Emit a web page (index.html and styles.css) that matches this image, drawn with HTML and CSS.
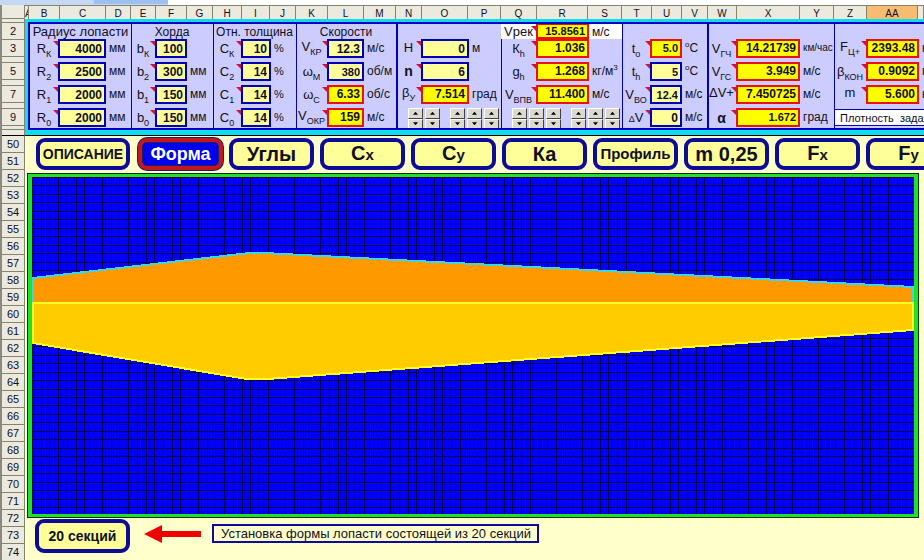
FILE: index.html
```html
<!DOCTYPE html>
<html lang="ru">
<head>
<meta charset="utf-8">
<title>Расчёт лопасти</title>
<link rel="stylesheet" href="styles.css">
</head>
<body>
<div class="strip"><span></span></div>
<div class="sheet">
  <div class="rows">
    <span class="r corner"></span><span class="r r1"></span><span class="r">2</span><span class="r">3</span><span class="r thin"></span><span class="r">5</span><span class="r thin"></span><span class="r">7</span><span class="r thin"></span><span class="r">9</span><span class="r r10"></span><span class="r r11"></span>
    <span class="r">50</span><span class="r">51</span><span class="r">52</span><span class="r">53</span><span class="r">54</span><span class="r">55</span><span class="r">56</span><span class="r">57</span><span class="r">58</span><span class="r">59</span><span class="r">60</span><span class="r">61</span><span class="r">62</span><span class="r">63</span><span class="r">64</span><span class="r">65</span><span class="r">66</span><span class="r">67</span><span class="r">68</span><span class="r">69</span><span class="r">70</span><span class="r">71</span><span class="r">72</span><span class="r">73</span><span class="r">74</span>
  </div>
  <main class="content">
    <div class="cols">
      <span>A</span><span>B</span><span>C</span><span>D</span><span>E</span><span>F</span><span>G</span><span>H</span><span>I</span><span>J</span><span>K</span><span>L</span><span>M</span><span>N</span><span>O</span><span>P</span><span>Q</span><span>R</span><span>S</span><span>T</span><span>U</span><span>V</span><span>W</span><span>X</span><span>Y</span><span>Z</span><span class="active">AA</span><span></span>
    </div>
    <div class="frozen">
      <div class="panel">
        <section class="group g1">
          <h2 class="large">Радиус лопасти</h2>
          <label for="rk">R<sub>К</sub></label><input id="rk" value="4000"><span>мм</span>
          <label for="r2">R<sub>2</sub></label><input id="r2" value="2500"><span>мм</span>
          <label for="r1">R<sub>1</sub></label><input id="r1" value="2000"><span>мм</span>
          <label for="r0">R<sub>0</sub></label><input id="r0" value="2000"><span>мм</span>
        </section>
        <section class="group g2">
          <h2>Хорда</h2>
          <label for="bk">b<sub>К</sub></label><input id="bk" value="100"><span></span>
          <label for="b2">b<sub>2</sub></label><input id="b2" value="300"><span>мм</span>
          <label for="b1">b<sub>1</sub></label><input id="b1" value="150"><span>мм</span>
          <label for="b0">b<sub>0</sub></label><input id="b0" value="150"><span>мм</span>
        </section>
        <section class="group g3">
          <h2>Отн. толщина</h2>
          <label for="ck">C<sub>К</sub></label><input id="ck" value="10"><span class="small">%</span>
          <label for="c2">C<sub>2</sub></label><input id="c2" value="14"><span class="small">%</span>
          <label for="c1">C<sub>1</sub></label><input id="c1" value="14"><span class="small">%</span>
          <label for="c0">C<sub>0</sub></label><input id="c0" value="14"><span class="small">%</span>
        </section>
        <section class="group g4">
          <h2>Скорости</h2>
          <label for="vkr" class="high">V<sub>КР</sub></label><input id="vkr" value="12.3"><span>м/с</span>
          <label for="wm">ω<sub>М</sub></label><input id="wm" class="small" value="380"><span>об/м</span>
          <label for="wc">ω<sub>С</sub></label><output id="wc">6.33</output><span>об/с</span>
          <label for="vokr" class="high">V<sub>ОКР</sub></label><output id="vokr">159</output><span>м/с</span>
        </section>
        <section class="group g5 thick">
          <h2></h2>
          <label for="h" class="start">H</label><input id="h" value="0"><span>м</span>
          <label for="n" class="start"><b>n</b></label><input id="n" value="6"><span></span>
          <label for="by" class="high">β<sub>У</sub></label><output id="by">7.514</output><span>град</span>
          <div class="spins">
            <div><button aria-label="Больше"></button><button aria-label="Меньше"></button></div>
            <div><button aria-label="Больше"></button><button aria-label="Меньше"></button></div>
            <div class="apart"><button aria-label="Больше"></button><button aria-label="Меньше"></button></div>
            <div><button aria-label="Больше"></button><button aria-label="Меньше"></button></div>
            <div><button aria-label="Больше"></button><button aria-label="Меньше"></button></div>
          </div>
        </section>
        <section class="group g6">
          <label for="vrek" class="white">Vрек</label><output id="vrek" class="small">15.8561</output><span class="white">м/с</span>
          <label for="kh">К<sub>h</sub></label><output id="kh">1.036</output><span></span>
          <label for="gh">g<sub>h</sub></label><output id="gh">1.268</output><span>кг/м<sup>3</sup></span>
          <label for="vvpv">V<sub>ВПВ</sub></label><output id="vvpv">11.400</output><span>м/с</span>
          <div class="spins">
            <div><button aria-label="Больше"></button><button aria-label="Меньше"></button></div>
            <div><button aria-label="Больше"></button><button aria-label="Меньше"></button></div>
            <div><button aria-label="Больше"></button><button aria-label="Меньше"></button></div>
            <div class="apart"><button aria-label="Больше"></button><button aria-label="Меньше"></button></div>
            <div><button aria-label="Больше"></button><button aria-label="Меньше"></button></div>
            <div><button aria-label="Больше"></button><button aria-label="Меньше"></button></div>
          </div>
        </section>
        <section class="group g7">
          <h2></h2>
          <label for="to">t<sub>o</sub></label><output id="to" class="small">5.0</output><span><sup>o</sup>C</span>
          <label for="th">t<sub>h</sub></label><input id="th" class="small" value="5"><span><sup>o</sup>C</span>
          <label for="vvo">V<sub>ВО</sub></label><input id="vvo" class="small" value="12.4"><span>м/с</span>
          <label for="dv"><small>Δ</small>V</label><input id="dv" value="0"><span>м/с</span>
        </section>
        <section class="group g8 thick">
          <h2></h2>
          <label for="vgch">V<sub>ГЧ</sub></label><output id="vgch">14.21739</output><span class="tiny">км/час</span>
          <label for="vgs">V<sub>ГС</sub></label><output id="vgs">3.949</output><span>м/с</span>
          <label for="dvp" class="high">ΔV+</label><output id="dvp">7.450725</output><span>м/с</span>
          <label for="al"><b>α</b></label><output id="al" class="small">1.672</output><span>град</span>
        </section>
        <section class="group g9">
          <h2></h2>
          <label for="fc" class="high">F<sub>Ц+</sub></label><output id="fc">2393.48</output><span>к</span>
          <label for="bkon">β<sub>КОН</sub></label><output id="bkon">0.9092</output><span>г</span>
          <label for="m" class="high">m</label><output id="m">5.600</output><span>к</span>
          <p class="note">Плотность  задан</p>
        </section>
      </div>
    </div>
    <nav class="tabs">
      <button class="tab first">ОПИСАНИЕ</button>
      <button class="tab current">Форма</button>
      <button class="tab">Углы</button>
      <button class="tab">С<small>х</small></button>
      <button class="tab">С<small>у</small></button>
      <button class="tab">Ка</button>
      <button class="tab long">Профиль</button>
      <button class="tab">m 0,25</button>
      <button class="tab">F<small>х</small></button>
      <button class="tab">F<small>у</small></button>
    </nav>
    <div class="chart">
      <svg viewBox="0 0 882 337" preserveAspectRatio="none" role="img" aria-label="Форма лопасти">
        <rect width="882" height="337" fill="#0000f8"/>
        <g fill="none" stroke="#00004c">
          <path d="M0 168.5H882" stroke-width="337" stroke-dasharray="1 8 1 7 1 8 1 8 1 8 1 7 1 8 1 8 1 8 1 7 1 8 1 8 1 8 1 7 1 8"/>
          <path d="M441 0V337" stroke-width="882" stroke-dasharray="1 7 1 8 1 7 1 8 1 7 1 8 1 7 1 8 1 7 1 8 1 7 1 8 1 7"/>
        </g>
        <path d="M0 101L217 76H232L882 110V126H0Z" fill="#ff9900"/>
        <path d="M0 126H882V153L235 202H215L0 166Z" fill="#ffcc00"/>
        <g fill="none" stroke-width="2" shape-rendering="crispEdges">
          <path d="M1 126V101L217 76H232L881 110V126" stroke="#40d8e0"/>
          <path d="M1 126H881V153L235 202H215L1 166Z" stroke="#ffff20"/>
        </g>
      </svg>
    </div>
    <footer class="bottom">
      <button class="tab sections">20 секций</button>
      <svg class="arrow" width="58" height="18" viewBox="0 0 58 18" aria-hidden="true"><path d="M0 9L18 0V6H57V12H18V18Z" fill="#f00000"/></svg>
      <p class="hint">Установка формы лопасти состоящей из 20 секций</p>
    </footer>
  </main>
</div>
</body>
</html>
```
FILE: styles.css
```css
* { box-sizing: border-box; }
body {
  margin: 0;
  overflow: hidden;
  background: #ffffcc;
  color: #101020;
  font: 12px "Liberation Sans", Arial, sans-serif;
}
h2, p { margin: 0; font-size: 12px; font-weight: 400; }
button, input { font-family: inherit; color: inherit; padding: 0; margin: 0; }

.strip { height: 5px; background: linear-gradient(90deg, #c4d8f4 168px, #fff 168px); padding-left: 94px; }
.strip span { display: block; width: 74px; height: 4px; background: #9fc0ee; }
.sheet { display: flex; }

/* row and column headings */
.rows { flex: 0 0 25px; display: flex; flex-direction: column; border-left: 2px solid #8c8a80; }
.r {
  height: 17px;
  flex: none;
  background: #ece9df;
  border-right: 1px solid #858270;
  border-bottom: 1px solid #858270;
  font-size: 11px;
  line-height: 17px;
  text-align: center;
}
.corner { height: 14px; }
.r1 { height: 4px; }
.thin { height: 6px; }
.r10 { height: 4px; }
.r11 { height: 6px; border-bottom-color: #000; }
.content { flex: 1; min-width: 0; }
.cols {
  display: grid;
  grid-template-columns: 4fr 31fr 46fr 25fr 25fr 31fr 26fr 29fr 28fr 26fr 32fr 36fr 32fr 26fr 46fr 33fr 36fr 51fr 34fr 30fr 30fr 26fr 29fr 63fr 34fr 33fr 51fr 6fr;
  height: 14px;
}
.cols span {
  min-width: 0;
  overflow: hidden;
  background: #ece9df;
  border-top: 1px solid #858270;
  border-right: 1px solid #858270;
  font-size: 10px;
  line-height: 15px;
  text-align: center;
}
.cols .active { background: #f8bc70; }

/* parameter panel */
.frozen { background: #10dcf0; padding: 3px 0 5px 3px; border-bottom: 1px solid #000; }
.panel {
  display: flex;
  overflow: hidden;
  height: 108px;
  background: #ccccff;
  border: 2px solid #0000c0;
  border-right: 0;
}
.group {
  display: grid;
  grid-template-rows: 15px repeat(3, 23px) 19px;
  min-width: 0;
  align-content: start;
  box-shadow: inset 1px 0 #0000c0;
}
.thick { box-shadow: inset 2px 0 #0000c0; }
.g1 { flex: 101 1 0; grid-template-columns: 28fr 48fr 25fr; box-shadow: none; }
.g2 { flex: 82 1 0; grid-template-columns: 24fr 32fr 26fr; }
.g3 { flex: 83 1 0; grid-template-columns: 28fr 30fr 25fr; }
.g4 { flex: 100 1 0; grid-template-columns: 31fr 37fr 32fr; }
.g5 { flex: 105 1 0; grid-template-columns: 25fr 48fr 32fr; }
.g6 { flex: 121 1 0; grid-template-columns: 35fr 53fr 33fr; }
.g7 { flex: 85 1 0; grid-template-columns: 28fr 32fr 25fr; }
.g8 { flex: 127 1 0; grid-template-columns: 29fr 64fr 34fr; }
.g9 { flex: 90 1 0; grid-template-columns: 32fr 53fr 5fr; }
.group h2 { grid-column: 1 / -1; text-align: center; line-height: 16px; white-space: nowrap; }
.group h2.large { font-size: 13px; }
.group label {
  position: relative;
  min-width: 0;
  height: 19px;
  font-size: 13px;
  line-height: 20px;
  text-align: center;
  white-space: nowrap;
}
.group label.high { line-height: 16px; }
.group label.start { line-height: 18px; }
.group label b { font-size: 14px; }
.group label small { font-size: 9px; }
.group label::after {
  content: "";
  position: absolute;
  top: 2px;
  right: 0;
  width: 5px;
  height: 5px;
  background: #d01040;
  clip-path: polygon(0 0, 100% 0, 100% 100%);
}
sub { font-size: 9px; line-height: 0; }
sup { font-size: 8px; line-height: 0; }
.group input, .group output {
  display: block;
  width: 100%;
  min-width: 0;
  height: 19px;
  padding: 0 2px;
  border: 2px solid #0000b4;
  border-radius: 0;
  background: #ffff99;
  font-size: 12px;
  font-weight: 700;
  line-height: 15px;
  text-align: right;
}
.group output { background: #ffff00; border-color: #e81010; }
.group .small { font-size: 11px; }
.group .tiny { font-size: 10px; }
.group > span { min-width: 0; padding-left: 3px; height: 19px; line-height: 18px; white-space: nowrap; }
.group .white { background: #fff; height: 15px; line-height: 16px; }
#vrek { height: 15px; line-height: 12px; border-top-width: 1px; }
.note {
  grid-column: 1 / -1;
  height: 17px;
  margin: 1px 0 0 1px;
  padding-left: 5px;
  background: #fff;
  border: solid #0000c0;
  border-width: 1px 0;
  font-size: 11px;
  line-height: 16px;
  white-space: pre;
  overflow: hidden;
}
.spins { grid-column: 1 / -1; display: flex; gap: 2px; padding-left: 12px; height: 21px; }
.g6 .spins { padding-left: 11px; }
.spins div { flex: 0 0 15px; display: flex; flex-direction: column; }
.spins .apart { margin-left: 8px; }
.spins button {
  flex: 1;
  display: grid;
  place-items: center;
  border: 1px solid;
  border-color: #fff #404040 #404040 #fff;
  background: #dcdad0;
}
.spins button::before { content: ""; width: 5px; height: 3px; background: #000; clip-path: polygon(50% 0, 100% 100%, 0 100%); }
.spins button + button::before { clip-path: polygon(0 0, 100% 0, 50% 100%); }

/* chart selection */
.tabs { display: flex; gap: 6px; height: 37px; padding: 2px 0 3px 11px; overflow: hidden; }
.tab {
  flex: 0 0 85px;
  height: 32px;
  border: 4px solid #0c0c98;
  border-radius: 9px;
  background: #ffff99;
  color: #101020;
  font-size: 20px;
  font-weight: 700;
  line-height: 22px;
  white-space: nowrap;
}
.tab small { font-size: 15px; }
.tab.first { flex-basis: 94px; margin-right: 2px; font-size: 14px; }
.tab.current { background: #0000f0; border-color: #c01820; box-shadow: 0 0 0 1px #202060, inset 0 0 0 1px #202060; color: #fff; font-size: 18px; }
.tab.long { font-size: 15px; }

.chart { margin: 0 5px 0 2px; border: 1px solid #003000; padding: 3px 4px; background: #20e028; }
.chart svg { display: block; width: 100%; height: 337px; }

.bottom { display: flex; align-items: center; padding: 1px 0 0 10px; }
.sections { flex-basis: 95px; height: 34px; font-size: 14px; }
.arrow { margin: 0 10px 4px 14px; }
.hint { height: 19px; margin-bottom: 5px; padding: 0 6px 0 7px; border: 2px solid #0c0c98; font-size: 13px; line-height: 15px; white-space: nowrap; }
```
